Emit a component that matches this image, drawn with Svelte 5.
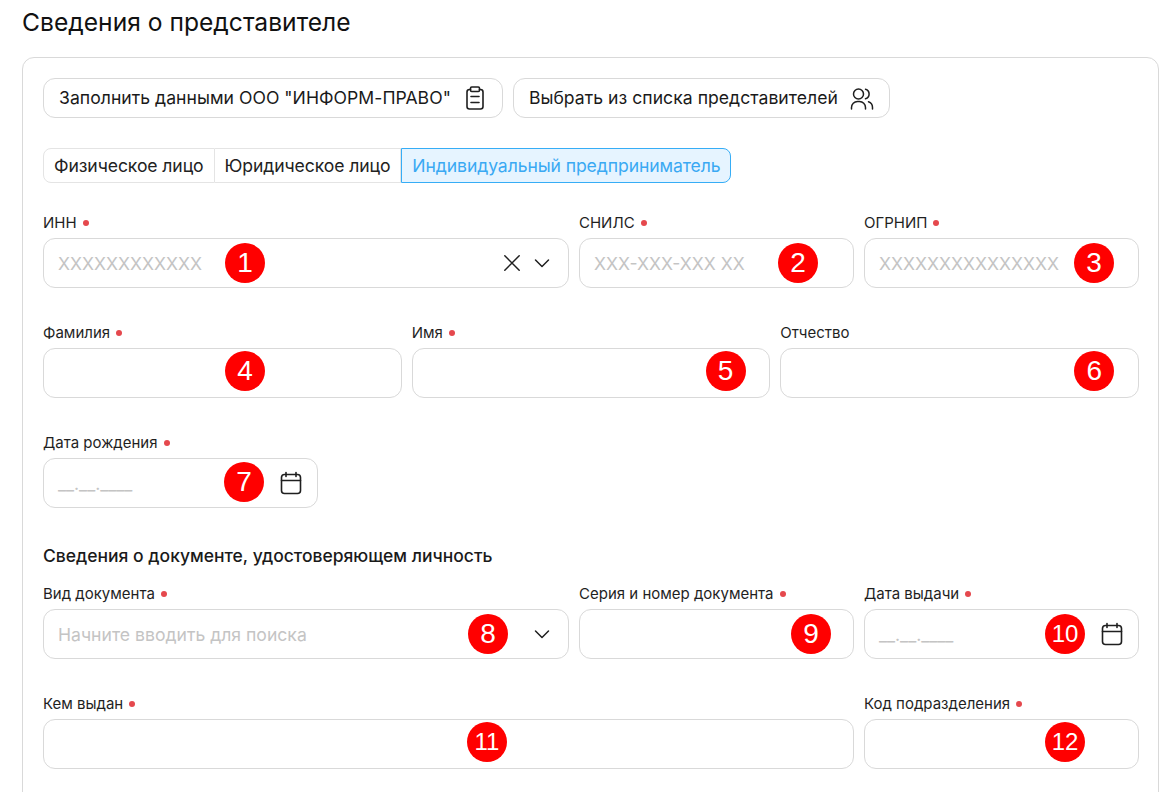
<script>
  const req = true;
  const row1 = [
    { label: 'ИНН', req, ph: 'XXXXXXXXXXXX', badge: 1, bx: 201, clear: true, chevron: true },
    { label: 'СНИЛС', req, ph: 'XXX-XXX-XXX XX', badge: 2, bx: 218 },
    { label: 'ОГРНИП', req, ph: 'XXXXXXXXXXXXXXX', badge: 3, bx: 229 }
  ];
  const row2 = [
    { label: 'Фамилия', req, badge: 4, bx: 201, by: -2 },
    { label: 'Имя', req, badge: 5, bx: 313, by: -2 },
    { label: 'Отчество', badge: 6, bx: 313, by: -2 }
  ];
  const row3 = [{ label: 'Дата рождения', req, ph: '__.__.____', badge: 7, bx: 200, by: -1, date: true }];
  const row4 = [
    { label: 'Вид документа', req, ph: 'Начните вводить для поиска', badge: 8, bx: 444, chevron: true },
    { label: 'Серия и номер документа', req, badge: 9, bx: 231 },
    { label: 'Дата выдачи', req, ph: '__.__.____', badge: 10, bx: 200, date: true }
  ];
  const row5 = [
    { label: 'Кем выдан', req, badge: 11, bx: 443, by: -2 },
    { label: 'Код подразделения', req, badge: 12, bx: 200, by: -2 }
  ];
</script>

{#snippet field(f)}
  <div class="field">
    <div class="label">{f.label}{#if f.req}<span class="dot"></span>{/if}</div>
    <div class="input">
      <span class="ph">{f.ph ?? ''}</span>
      {#if f.clear}
        <svg class="ic-x" width="20" height="20" viewBox="0 0 20 20" fill="none" stroke="#1f1f1f" stroke-width="1.5" stroke-linecap="round"><path d="M2.800 2.800 17.200 17.200M17.200 2.800 2.800 17.200"/></svg>
      {/if}
      {#if f.chevron}
        <svg class="ic-c" width="16" height="16" viewBox="0 0 16 16" fill="none" stroke="#1f1f1f" stroke-width="1.5" stroke-linecap="round" stroke-linejoin="round"><path d="M1.500 5 8 11.500 14.500 5"/></svg>
      {/if}
      {#if f.date}
        <svg class="ic-d" width="24" height="24" viewBox="0 0 24 24" fill="none" stroke="#1f1f1f" stroke-width="1.6" stroke-linecap="round" stroke-linejoin="round"><rect x="2.500" y="3.500" width="19" height="19" rx="3"/><path d="M2.500 9.500h19M7 1.500v4M17 1.500v4"/></svg>
      {/if}
      <span class="badge" class:two={f.badge > 9} style="left:{f.bx}px;margin-top:{f.by ?? 0}px">{f.badge}</span>
    </div>
  </div>
{/snippet}

<div class="page">
  <h1>Сведения о представителе</h1>
  <section class="card">
    <div class="actions">
      <button class="btn">
        Заполнить данными ООО "ИНФОРМ-ПРАВО"
        <svg width="24" height="24" viewBox="0 0 24 24" fill="none" stroke="#1f1f1f" stroke-width="1.6" stroke-linecap="round" stroke-linejoin="round"><path d="M7.500 3.500H6.500a2.500 2.500 0 0 0-2.500 2.500V20.500A2.500 2.500 0 0 0 6.500 23h11a2.500 2.500 0 0 0 2.500-2.500V6a2.500 2.500 0 0 0-2.500-2.500h-1"/><rect x="7.500" y="1" width="9" height="4.500" rx="1.200"/><path d="M8 10.500h8M8 16.500h8"/></svg>
      </button>
      <button class="btn">
        Выбрать из списка представителей
        <svg width="24" height="24" viewBox="0 0 24 24" fill="none" stroke="#1f1f1f" stroke-width="1.5" stroke-linecap="round" stroke-linejoin="round"><circle cx="8.500" cy="8" r="5"/><path d="M1.500 23v-1.500a6 6 0 0 1 6-6h2a6 6 0 0 1 6 6V23"/><path d="M15.500 3.200a5 5 0 0 1 0 9.600M18.500 15.800a6 6 0 0 1 4 5.700V23"/></svg>
      </button>
    </div>

    <div class="tabs">
      <div class="tab first">Физическое лицо</div>
      <div class="tab">Юридическое лицо</div>
      <div class="tab active">Индивидуальный предприниматель</div>
    </div>

    <div class="grid g-main first-row">
      {#each row1 as f}{@render field(f)}{/each}
    </div>
    <div class="grid g-three">
      {#each row2 as f}{@render field(f)}{/each}
    </div>
    <div class="grid g-date">
      {#each row3 as f}{@render field(f)}{/each}
    </div>

    <h2>Сведения о документе, удостоверяющем личность</h2>

    <div class="grid g-main doc-row">
      {#each row4 as f}{@render field(f)}{/each}
    </div>
    <div class="grid g-wide">
      {#each row5 as f}{@render field(f)}{/each}
    </div>
  </section>
</div>

<style>
  :global(html), :global(body) {
    margin: 0;
    height: 792px;
    overflow: hidden;
    background: #fff;
  }
  .page {
    padding: 6px 15px 0 22px;
    font-family: Inter, "Noto Sans", sans-serif;
    color: #1a1a1a;
  }
  h1 {
    margin: 0 0 18px;
    font-size: 24.640px;
    line-height: 33px;
    font-weight: 400;
    color: #111;
  }
  .card {
    border: 1px solid #d9d9d9;
    border-radius: 12px;
    padding: 20px 19px 60px 20px;
    box-sizing: border-box;
  }
  .actions {
    display: flex;
    gap: 10px;
  }
  .btn {
    height: 40px;
    box-sizing: border-box;
    display: flex;
    align-items: center;
    gap: 12px;
    padding: 0 15px;
    background: #fff;
    border: 1px solid #d9d9d9;
    border-radius: 12px;
    font: 400 17.600px/24px Inter, sans-serif;
    letter-spacing: 0.03px;
    color: #1a1a1a;
    white-space: nowrap;
  }
  .tabs {
    display: flex;
    margin-top: 30px;
    height: 35px;
  }
  .tab {
    box-sizing: border-box;
    height: 35px;
    line-height: 34px;
    padding: 0 10px;
    font-size: 17.600px;
    letter-spacing: -0.1px;
    border: 1px solid #e4e4e4;
    border-left: 0;
    color: #222;
    white-space: nowrap;
  }
  .tab.first {
    border-left: 1px solid #e4e4e4;
    border-radius: 8px 0 0 8px;
  }
  .tab.active {
    border: 1px solid #36adf6;
    border-radius: 0 8px 8px 0;
    background: #e6f4ff;
    color: #3aa9f3;
  }
  .grid {
    display: grid;
    column-gap: 10px;
    margin-top: 34px;
  }
  .first-row { margin-top: 29px; }
  .g-main { grid-template-columns: 526px 275px 275px; }
  .g-three { grid-template-columns: repeat(3, 1fr); }
  .g-date { grid-template-columns: 275px; }
  .g-wide { grid-template-columns: 811px 275px; }
  .doc-row { margin-top: 15px; }
  .label {
    box-sizing: border-box;
    height: 21px;
    padding-top: 1px;
    margin-bottom: 5px;
    font-size: 15px;
    line-height: 20px;
    color: #1f1f1f;
    display: flex;
    align-items: center;
    gap: 6px;
    white-space: nowrap;
  }
  .dot {
    width: 6px;
    height: 6px;
    border-radius: 50%;
    background: #e5484d;
  }
  .input {
    position: relative;
    box-sizing: border-box;
    height: 50px;
    display: flex;
    align-items: center;
    padding: 0 14px;
    border: 1px solid #d9d9d9;
    border-radius: 12px;
    background: #fff;
  }
  .ph {
    flex: 1;
    font-size: 17.600px;
    color: #c4c4c4;
    white-space: nowrap;
  }
  .ic-x { margin-right: 12px; }
  .ic-c { margin-right: 4px; }
  .ic-d { margin-right: 0.5px; }
  .badge {
    position: absolute;
    top: 50%;
    width: 40px;
    height: 40px;
    transform: translate(-20px, -20px);
    border-radius: 50%;
    background: #f00;
    color: #fff;
    font: 400 28px/40px "Liberation Sans", Arial, sans-serif;
    text-align: center;
  }
  .badge.two {
    font-size: 24px;
  }
  h2 {
    margin: 36px 0 0;
    font-size: 17.500px;
    line-height: 24px;
    font-weight: 500;
    color: #1a1a1a;
  }
</style>
